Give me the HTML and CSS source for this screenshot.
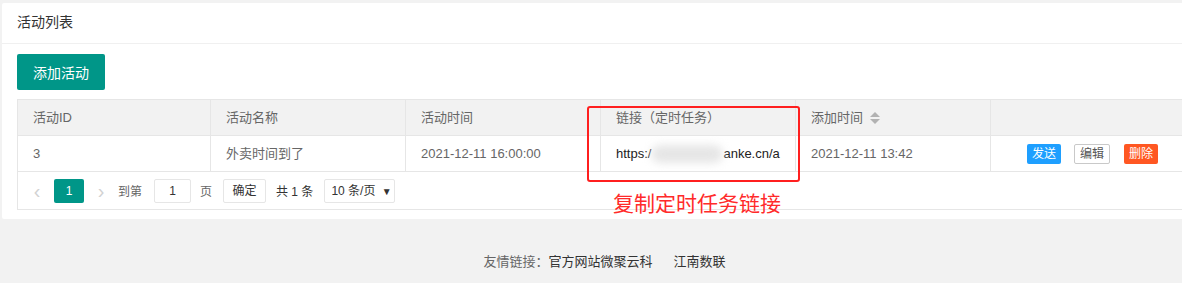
FILE: index.html
```html
<!DOCTYPE html>
<html lang="zh-CN">
<head>
  <meta charset="UTF-8">
  <meta name="viewport" content="width=device-width, initial-scale=1.0">
  <title>活动列表</title>
  <link rel="stylesheet" href="styles.css">
</head>
<body>
  <div class="page">
    <div class="card">
      <div class="card-header">活动列表</div>
      <div class="card-body">
        <button class="btn">添加活动</button>

        <table class="table">
          <thead>
            <tr>
              <th class="col-id">活动ID</th>
              <th>活动名称</th>
              <th>活动时间</th>
              <th>链接（定时任务）</th>
              <th>添加时间 <span class="sort"><i class="up"></i><i class="down"></i></span></th>
              <th></th>
            </tr>
          </thead>
          <tbody>
            <tr>
              <td>3</td>
              <td>外卖时间到了</td>
              <td>2021-12-11 16:00:00</td>
              <td class="link">https:/<span class="blur"></span>anke.cn/a</td>
              <td>2021-12-11 13:42</td>
              <td class="actions">
                <span class="btn-xs blue">发送</span>
                <span class="btn-xs plain">编辑</span>
                <span class="btn-xs red">删除</span>
              </td>
            </tr>
          </tbody>
        </table>

        <div class="pager">
          <span class="pg-arrow prev">&lsaquo;</span>
          <span class="pg-curr">1</span>
          <span class="pg-arrow next">&rsaquo;</span>
          <span class="pg-text skip">到第</span>
          <span class="pg-input">1</span>
          <span class="pg-text page-unit">页</span>
          <span class="pg-btn">确定</span>
          <span class="pg-text count">共 1 条</span>
          <span class="pg-select">10 条/页 <b>▼</b></span>
        </div>
      </div>
    </div>

    <div class="footer">
      <span class="muted">友情链接：</span><a>官方网站微聚云科</a><a class="second">江南数联</a>
    </div>

    <!-- 标注 -->
    <div class="mark-box"></div>
    <div class="mark-text">复制定时任务链接</div>
  </div>
</body>
</html>
```

FILE: styles.css
```css
body {
  margin: 0;
  background-color: #f2f2f2;
  font-family: "Liberation Sans", "Noto Sans CJK SC", sans-serif;
  font-size: 14px;
  color: #666;
  overflow: hidden;
}
.page {
  position: relative;
  padding: 3px 0 0 2px;
  height: 280px;
}
.card {
  background-color: white;
  border-radius: 2px;
  width: 1200px;
}
.card-header {
  height: 40px;
  line-height: 38px;
  padding: 0 15px;
  border-bottom: 1px solid #f0f0f0;
  color: #333;
}
.card-body {
  padding: 10px 15px 9px;
}
.btn {
  display: block;
  height: 36px;
  padding: 0 16px;
  border: none;
  border-radius: 2px;
  background-color: #009688;
  color: white;
  font-family: inherit;
  font-size: 14px;
}
.table {
  width: 1169px;
  margin-top: 9px;
  border-collapse: collapse;
  table-layout: fixed;
}
.table th,
.table td {
  height: 35px;
  padding: 0 15px;
  border: 1px solid #e6e6e6;
  text-align: left;
  font-weight: normal;
  font-size: 13px;
  line-height: 20px;
  white-space: nowrap;
  overflow: hidden;
}
.table th.col-id {
  width: 162px;
}
.table th {
  background-color: #f2f2f2;
}
.sort {
  display: inline-flex;
  flex-direction: column;
  gap: 2px;
  margin-left: 3px;
  vertical-align: middle;
}
.sort i {
  width: 0;
  height: 0;
  border-left: 5px solid transparent;
  border-right: 5px solid transparent;
}
.sort .up {
  border-bottom: 5px solid #b2b2b2;
}
.sort .down {
  border-top: 5px solid #b2b2b2;
}
.link {
  color: #222;
}
.blur {
  display: inline-block;
  width: 72px;
  height: 18px;
  vertical-align: middle;
  background-color: #e6e6e6;
  border-radius: 9px;
  filter: blur(4px);
}
.table td.actions {
  padding-left: 36px;
  font-size: 0;
}
.btn-xs {
  display: inline-block;
  height: 20px;
  line-height: 20px;
  padding: 0 5px;
  border-radius: 2px;
  font-size: 12px;
  color: white;
  vertical-align: middle;
}
.btn-xs.blue {
  background-color: #1e9fff;
  margin-right: 13px;
}
.btn-xs.plain {
  height: 18px;
  line-height: 18px;
  border: 1px solid #c9c9c9;
  color: #555;
  background-color: white;
  margin-right: 14px;
}
.btn-xs.red {
  background-color: #ff5722;
}
.pager {
  display: flex;
  align-items: center;
  width: 1167px;
  height: 37px;
  border: 1px solid #e6e6e6;
  border-top: none;
  font-size: 12px;
}
.pg-arrow {
  width: 22px;
  text-align: center;
  font-size: 20px;
  color: #d2d2d2;
  line-height: 24px;
}
.prev {
  margin-left: 8px;
}
.pg-curr {
  width: 30px;
  height: 24px;
  line-height: 24px;
  margin: 0 6px;
  text-align: center;
  border-radius: 2px;
  background-color: #009688;
  color: white;
}
.next {
  margin-right: 6px;
}
.pg-input,
.pg-btn,
.pg-select {
  box-sizing: border-box;
  height: 24px;
  line-height: 22px;
  border: 1px solid #e6e6e6;
  border-radius: 2px;
  color: #333;
}
.pg-input {
  width: 37px;
  margin-left: 12px;
  text-align: center;
}
.page-unit {
  margin-left: 9px;
}
.pg-btn {
  width: 43px;
  margin-left: 11px;
  text-align: center;
}
.count {
  margin-left: 10px;
  color: #333;
}
.pg-select {
  width: 71px;
  margin-left: 11px;
  padding-left: 6px;
}
.pg-select b {
  font-weight: normal;
  font-size: 10px;
  margin-left: 3px;
}
.footer {
  margin-top: 34px;
  padding-left: 25px;
  text-align: center;
  font-size: 13px;
  line-height: 18px;
  color: #333;
}
.footer .muted {
  color: #666;
}
.footer .second {
  margin-left: 21px;
}
.mark-box {
  position: absolute;
  left: 587px;
  top: 106px;
  width: 209px;
  height: 72px;
  border: 2px solid #ff1f1f;
  border-radius: 3px;
}
.mark-text {
  position: absolute;
  left: 613px;
  top: 190px;
  font-size: 21px;
  line-height: 28px;
  color: #ff2a2a;
}
```
